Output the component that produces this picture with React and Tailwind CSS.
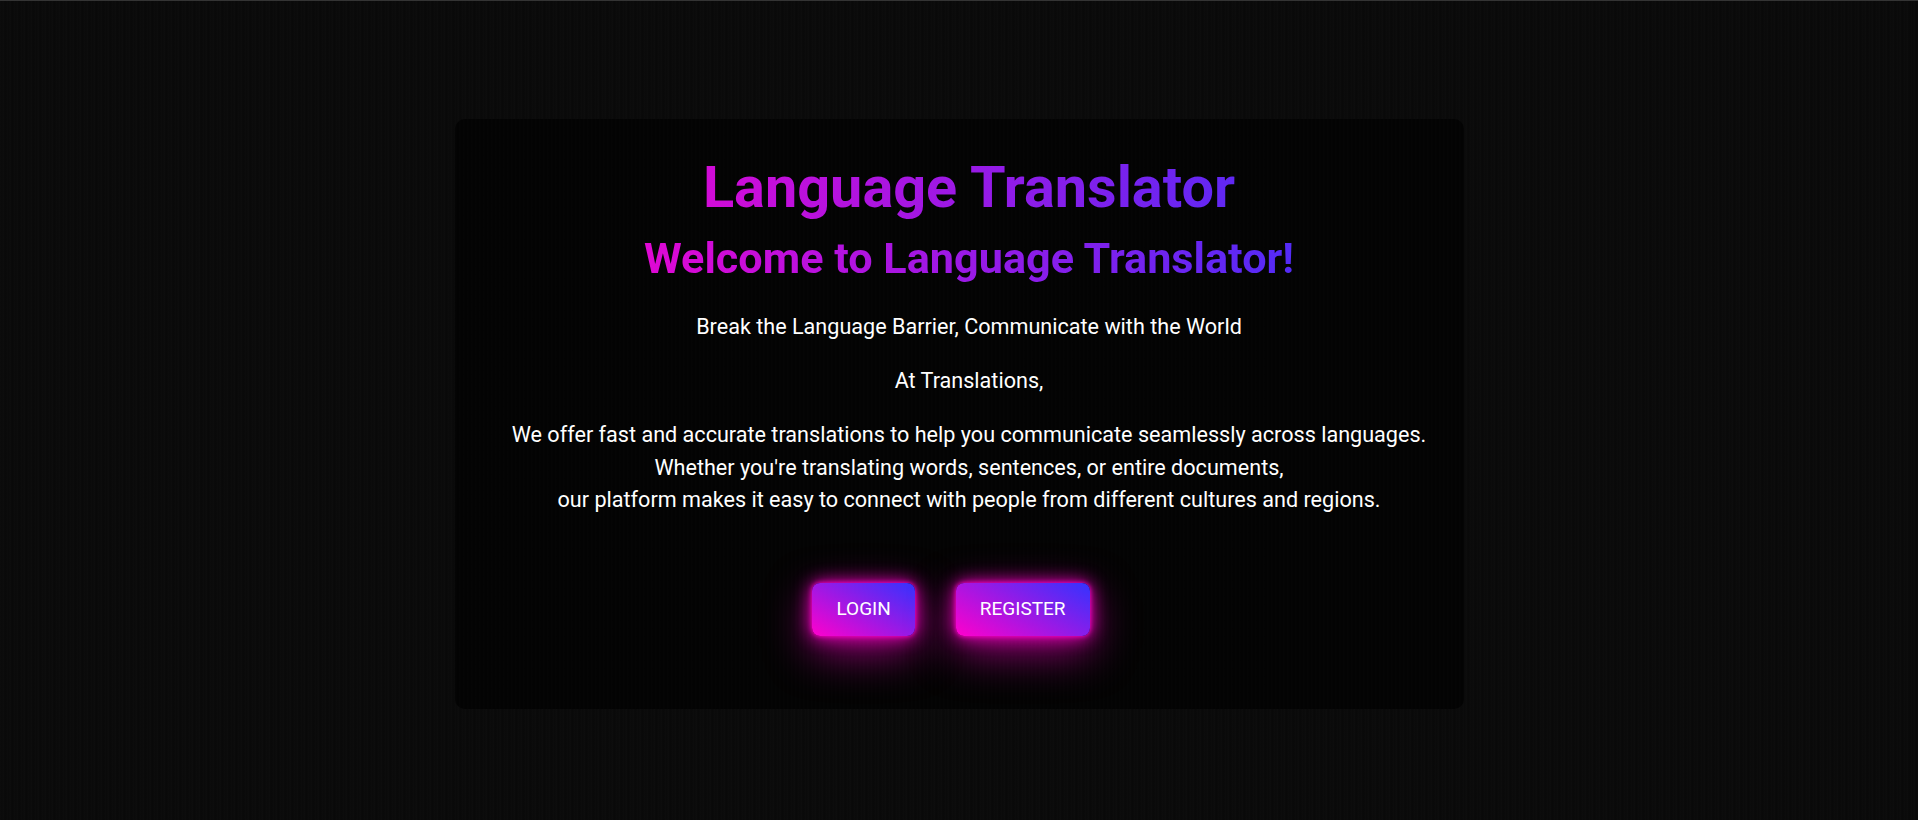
import React from "react";

export default function App() {
  return (
    <div
      className="min-h-[820px] w-full border-t border-[#343434] bg-[#090909] bg-[repeating-linear-gradient(90deg,rgba(255,255,255,0.012)_0px,rgba(255,255,255,0.012)_1px,rgba(0,0,0,0.04)_2px,rgba(255,255,255,0.02)_3px,rgba(0,0,0,0.03)_5px,rgba(255,255,255,0.008)_7px)] flex flex-col items-center pt-[118px]"
      style={{ fontFamily: "Roboto, 'Noto Sans', sans-serif" }}
    >
      <div className="w-[1009px] h-[590px] rounded-[10px] bg-[#030303] bg-[repeating-linear-gradient(90deg,rgba(255,255,255,0.006)_0px,rgba(255,255,255,0.006)_1px,rgba(0,0,0,0)_2px,rgba(0,0,0,0)_4px)] pl-[40px] pr-[20px] pt-[37px] flex flex-col items-stretch text-center">
        <h1 className="text-[57.6px] leading-[64px] font-bold bg-[linear-gradient(90deg,#ff00cc,#3333ff)] bg-clip-text text-transparent">
          Language Translator
        </h1>
        <h2 className="mt-[14px] text-[43.2px] leading-[50px] font-bold bg-[linear-gradient(90deg,#ff00cc,#3333ff)] bg-clip-text text-transparent">
          Welcome to Language Translator!
        </h2>
        <p className="mt-[27px] text-[21.6px] leading-[32px] text-white">
          Break the Language Barrier, Communicate with the World
        </p>
        <p className="mt-[22px] text-[21.6px] leading-[32px] text-white">
          At Translations,
        </p>
        <p className="mt-[22px] text-[21.6px] leading-[32.7px] text-white">
          We offer fast and accurate translations to help you communicate seamlessly across languages.
          <br />
          Whether you're translating words, sentences, or entire documents,
          <br />
          our platform makes it easy to connect with people from different cultures and regions.
        </p>
        <div className="mt-[66px] flex justify-center gap-[41px] pr-[36px]">
          <button className="h-[53px] px-[24px] rounded-[8px] bg-[linear-gradient(30deg,#ff00cc,#3333ff)] text-white text-[19px] font-normal uppercase shadow-[0_0_5px_#ff00cc,0_0_18px_#ff00cc,0_14px_45px_rgba(255,0,204,0.6)]">
            LOGIN
          </button>
          <button className="h-[53px] px-[24px] rounded-[8px] bg-[linear-gradient(30deg,#ff00cc,#3333ff)] text-white text-[19px] font-normal uppercase shadow-[0_0_5px_#ff00cc,0_0_18px_#ff00cc,0_14px_45px_rgba(255,0,204,0.6)]">
            REGISTER
          </button>
        </div>
      </div>
    </div>
  );
}
